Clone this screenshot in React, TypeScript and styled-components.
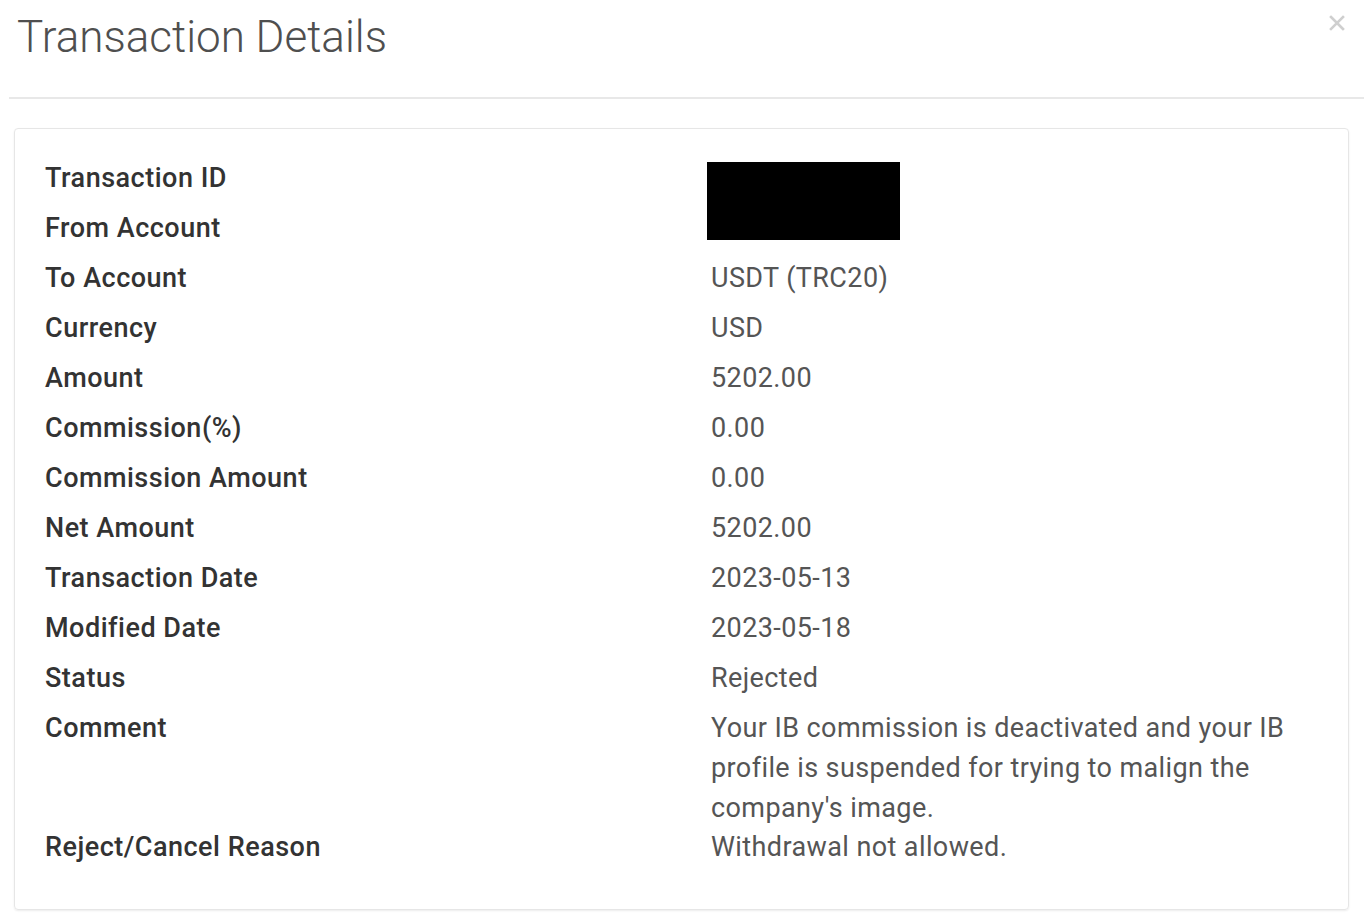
import React from "react";
import styled, { createGlobalStyle } from "styled-components";

const Global = createGlobalStyle`
  html, body { margin: 0; padding: 0; background: #ffffff; }
  body { font-family: Roboto, "Liberation Sans", Arial, sans-serif; }
`;

const Modal = styled.div`
  width: 1370px;
  height: 924px;
  box-sizing: border-box;
  background: #fff;
  padding: 0 6px 0 9px;
  display: flex;
  flex-direction: column;
`;

const Header = styled.div`
  display: flex;
  align-items: flex-start;
  justify-content: space-between;
  height: 99px;
  border-bottom: 2px solid #e8e8e8;
  box-sizing: border-box;
`;

const Title = styled.h1`
  margin: 10px 0 0 8px;
  font-family: Roboto, "Liberation Sans", Arial, sans-serif;
  font-weight: 300;
  font-size: 44px;
  line-height: 54px;
  color: #4f4f4f;
`;

const Close = styled.button`
  border: none;
  background: none;
  padding: 0;
  margin: 9px 13px 0 0;
  width: 28px;
  height: 28px;
  display: flex;
  align-items: center;
  justify-content: center;
  cursor: pointer;
`;

const Body = styled.div`
  padding: 29px 15px 0 5px;
`;

const Card = styled.div`
  border: 1px solid #e6e6e6;
  border-radius: 4px;
  box-shadow: 0 1px 2px rgba(0, 0, 0, 0.08);
  padding: 24px 30px 28px 30px;
  height: 782px;
  box-sizing: border-box;
`;

const Row = styled.div<{ $pull?: number }>`
  display: grid;
  grid-template-columns: 666px 1fr;
  padding: 5px 0;
  margin-bottom: ${(p) => (p.$pull ? `-${p.$pull}px` : "0")};
`;

const Label = styled.div`
  font-family: Roboto, "Liberation Sans", Arial, sans-serif;
  font-weight: 500;
  font-size: 27px;
  letter-spacing: 0.5px;
  line-height: 40px;
  color: #333;
`;

const Value = styled.div`
  font-family: Roboto, "Liberation Sans", Arial, sans-serif;
  font-weight: 400;
  font-size: 27px;
  letter-spacing: 0.4px;
  line-height: 40px;
  color: #555;
  max-width: 600px;
`;

const Redact = styled.div`
  width: 193px;
  height: 78px;
  background: #000;
  margin: 4px 0 -42px -4px;
`;

const rows: [string, React.ReactNode][] = [
  ["Transaction ID", <Redact />],
  ["From Account", ""],
  ["To Account", "USDT (TRC20)"],
  ["Currency", "USD"],
  ["Amount", "5202.00"],
  ["Commission(%)", "0.00"],
  ["Commission Amount", "0.00"],
  ["Net Amount", "5202.00"],
  ["Transaction Date", "2023-05-13"],
  ["Modified Date", "2023-05-18"],
  ["Status", "Rejected"],
  [
    "Comment",
    "Your IB commission is deactivated and your IB profile is suspended for trying to malign the company's image.",
  ],
  ["Reject/Cancel Reason", "Withdrawal not allowed."],
];

export default function App() {
  return (
    <>
      <Global />
      <Modal>
        <Header>
          <Title>Transaction Details</Title>
          <Close aria-label="Close">
            <svg width="18" height="18" viewBox="0 0 18 18">
              <path d="M3 3 L15 15 M15 3 L3 15" stroke="#cfcfcf" strokeWidth="2.6" strokeLinecap="square" />
            </svg>
          </Close>
        </Header>
        <Body>
          <Card>
            {rows.map(([l, v]) => (
              <Row key={l} $pull={l === "Comment" ? 11 : 0}>
                <Label>{l}</Label>
                <Value>{v}</Value>
              </Row>
            ))}
          </Card>
        </Body>
      </Modal>
    </>
  );
}
